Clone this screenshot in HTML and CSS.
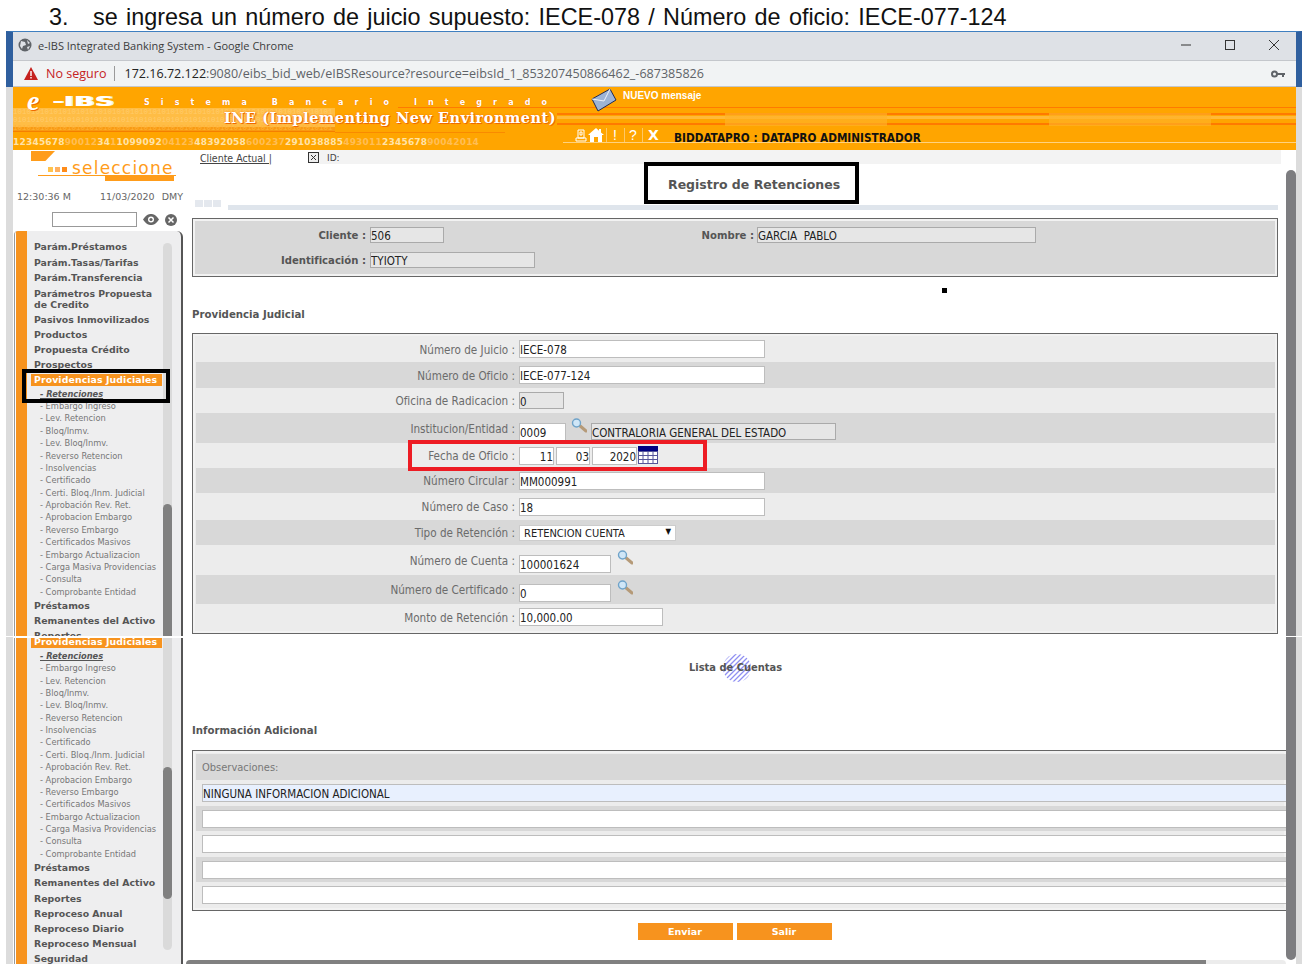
FILE: index.html
```html
<!DOCTYPE html>
<html lang="es">
<head>
  <meta charset="UTF-8" />
  <title>e-IBS Registro de Retenciones</title>
  <link rel="stylesheet" href="styles.css">
</head>
<body>

<svg class="defs" width="0" height="0">
  <symbol id="lupa" viewBox="0 0 16 15">
    <line x1="8" y1="7" x2="15" y2="13" stroke="#b59a78" stroke-width="3" stroke-linecap="round"/>
    <circle cx="5.5" cy="5" r="4" fill="#cfe6f7" stroke="#6fa3c9" stroke-width="1.4"/>
  </symbol>
</svg>

<h1 class="slide-title"><span class="num">3.</span>se ingresa un número de juicio supuesto: IECE-078 / Número de oficio: IECE-077-124</h1>

<div class="chrome">
  <div class="titlebar">
    <svg class="globe" width="14" height="14" viewBox="0 0 14 14"><circle cx="7" cy="7" r="6.5" fill="#5f6368"/><path d="M3 3l4 1 1 3-3 1-1 3-2-3zM9 2l3 3-2 1zM9 9l3-1-2 4z" fill="#dee1e6"/></svg>
    <span class="wintitle">e-IBS Integrated Banking System - Google Chrome</span>
    <div class="winbtns">
      <svg width="12" height="12" viewBox="0 0 12 12"><line x1="1" y1="6" x2="11" y2="6" stroke="#333"/></svg>
      <svg width="12" height="12" viewBox="0 0 12 12"><rect x="1.5" y="1.5" width="9" height="9" fill="none" stroke="#333"/></svg>
      <svg width="12" height="12" viewBox="0 0 12 12"><path d="M1 1l10 10M11 1L1 11" stroke="#333" fill="none"/></svg>
    </div>
  </div>
  <div class="addressbar">
    <svg class="warn" width="14" height="13" viewBox="0 0 14 13"><path d="M7 0l7 13H0z" fill="#c5221f"/><rect x="6.3" y="4" width="1.4" height="5" fill="#fff"/><rect x="6.3" y="10" width="1.4" height="1.5" fill="#fff"/></svg>
    <span class="notsecure">No seguro</span>
    <span class="url"><b>172.16.72.122</b>:9080/eibs_bid_web/eIBSResource?resource=eibsId_1_853207450866462_-687385826</span>
    <svg class="key" width="14" height="8" viewBox="0 0 14 8"><circle cx="3.5" cy="4" r="2.5" fill="none" stroke="#5f6368" stroke-width="2"/><path d="M6 3h8v2h-1v2h-2V5H6z" fill="#5f6368"/></svg>
  </div>
</div>

<div class="app">
  <header class="hdr">
    <div class="bits">
      <div>10101010101010101010101010101010101010101010101010101010101010101010101</div>
      <div>01010101010101010101010101010101010101010101010101010101010101010101010</div>
      <div class="bits-dark">10101010101010101010101010101010101010101010101010101010101010101010101</div>
    </div>
    <div class="hdr-top">
      <span class="logo-e">e</span>
      <span class="logo-ibs">-IBS</span>
      <span class="sistema">Sistema&nbsp;Bancario&nbsp;Integrado</span>
      <svg class="envelope" width="26" height="24" viewBox="0 0 26 24">
        <path d="M1 11L19 1l6 11L7 23z" fill="#9db4d6" stroke="#1f2a55"/>
        <path d="M1 11l12 2L19 1" fill="none" stroke="#eef2fa"/>
      </svg>
      <span class="nuevo">NUEVO mensaje</span>
    </div>
    <div class="ine">INE (Implementing New Environment)</div>
    <div class="hdr-bottom">
      <div class="digits">12345678<i>90012</i>34<i>1</i>1099092<i>04123</i>48392058<i>600237</i>291038885<i>493011</i>2345678<i>90042014</i></div>
      <div class="tools">
        <svg class="tool-doc" width="12" height="13" viewBox="0 0 12 13"><path d="M3 1h6v8H3zM1 9h10v3H1zM5 3h2v3H5z" fill="none" stroke="#fff"/></svg>
        <svg width="16" height="14" viewBox="0 0 16 14"><path d="M8 0L0 7h2v7h4V9h4v5h4V7h2l-3-2.6V1h-2v1.7z" fill="#fff"/></svg>
        <span class="tool-sep">!</span>
        <span class="tool-sep">?</span>
        <span class="tool-x">X</span>
        <span class="user">BIDDATAPRO : DATAPRO ADMINISTRADOR</span>
      </div>
    </div>
  </header>

  <div class="work">
    <aside class="side">
      <div class="side-top">
        <div class="tab-mark"></div>
        <div class="sel-row">
          <span class="dots"><i></i><i></i><i></i></span>
          <span class="seleccione">seleccione</span>
        </div>
        <div class="sel-bar"></div>
        <div class="time-row"><span>12:30:36 M</span><span>11/03/2020</span><span>DMY</span></div>
        <div class="search-row">
          <input class="search" type="text">
          <svg width="16" height="11" viewBox="0 0 16 11"><path d="M0 5.5C3 1 5.500 0 8 0s5 1 8 5.500C13 10 10.500 11 8 11S3 10 0 5.500z" fill="#666"/><circle cx="8" cy="5.500" r="3" fill="#fff"/><circle cx="8" cy="5.500" r="1.600" fill="#666"/></svg>
          <svg width="12" height="12" viewBox="0 0 12 12"><circle cx="6" cy="6" r="6" fill="#666"/><path d="M3.500 3.500l5 5M8.500 3.500l-5 5" stroke="#fff" stroke-width="1.500"/></svg>
        </div>
      </div>

      <div class="panel panel-a">
        <div class="strip"></div>
        <ul class="menu">
          <li class="m">Parám.Préstamos</li>
          <li class="m">Parám.Tasas/Tarifas</li>
          <li class="m">Parám.Transferencia</li>
          <li class="m m2">Parámetros Propuesta de Credito</li>
          <li class="m">Pasivos Inmovilizados</li>
          <li class="m">Productos</li>
          <li class="m">Propuesta Crédito</li>
          <li class="m">Prospectos</li>
          <li class="m active"><span>Providencias Judiciales</span></li>
          <li class="s current">- Retenciones</li>
          <li class="s">- Embargo Ingreso</li>
          <li class="s">- Lev. Retencion</li>
          <li class="s">- Bloq/Inmv.</li>
          <li class="s">- Lev. Bloq/Inmv.</li>
          <li class="s">- Reverso Retencion</li>
          <li class="s">- Insolvencias</li>
          <li class="s">- Certificado</li>
          <li class="s">- Certi. Bloq./Inm. Judicial</li>
          <li class="s">- Aprobación Rev. Ret.</li>
          <li class="s">- Aprobacion Embargo</li>
          <li class="s">- Reverso Embargo</li>
          <li class="s">- Certificados Masivos</li>
          <li class="s">- Embargo Actualizacion</li>
          <li class="s">- Carga Masiva Providencias</li>
          <li class="s">- Consulta</li>
          <li class="s">- Comprobante Entidad</li>
          <li class="m">Préstamos</li>
          <li class="m">Remanentes del Activo</li>
          <li class="m">Reportes</li>
        </ul>
        <div class="track track-a"><div class="thumb thumb-a"></div></div>
      </div>

      <div class="panel panel-b">
        <div class="strip"></div>
        <ul class="menu">
          <li class="m active"><span>Providencias Judiciales</span></li>
          <li class="s current">- Retenciones</li>
          <li class="s">- Embargo Ingreso</li>
          <li class="s">- Lev. Retencion</li>
          <li class="s">- Bloq/Inmv.</li>
          <li class="s">- Lev. Bloq/Inmv.</li>
          <li class="s">- Reverso Retencion</li>
          <li class="s">- Insolvencias</li>
          <li class="s">- Certificado</li>
          <li class="s">- Certi. Bloq./Inm. Judicial</li>
          <li class="s">- Aprobación Rev. Ret.</li>
          <li class="s">- Aprobacion Embargo</li>
          <li class="s">- Reverso Embargo</li>
          <li class="s">- Certificados Masivos</li>
          <li class="s">- Embargo Actualizacion</li>
          <li class="s">- Carga Masiva Providencias</li>
          <li class="s">- Consulta</li>
          <li class="s">- Comprobante Entidad</li>
          <li class="m">Préstamos</li>
          <li class="m">Remanentes del Activo</li>
          <li class="m">Reportes</li>
          <li class="m">Reproceso Anual</li>
          <li class="m">Reproceso Diario</li>
          <li class="m">Reproceso Mensual</li>
          <li class="m">Seguridad</li>
        </ul>
        <div class="track track-b"><div class="thumb thumb-b"></div></div>
      </div>
    </aside>

    <main class="content">
      <div class="infobar">
        <a class="cliente-actual">Cliente Actual |</a>
        <svg class="chk" width="11" height="11" viewBox="0 0 11 11"><rect x="0.500" y="0.500" width="10" height="10" fill="#eee" stroke="#333"/><path d="M3 3l5 5M8 3L3 8" stroke="#333"/></svg>
        <span class="id-bar">ID:</span>
      </div>

      <div class="title-box">Registro de Retenciones</div>

      <div class="divider">
        <span class="squares"><i></i><i></i><i></i></span>
        <span class="rule"></span>
      </div>

      <section class="box box-client">
        <div class="client-row">
          <label class="lbl-b lbl-client">Cliente :</label>
          <input class="inp ro w-74" value="506">
          <label class="lbl-b lbl-nombre">Nombre :</label>
          <input class="inp ro w-279" value="GARCIA  PABLO">
        </div>
        <div class="client-row">
          <label class="lbl-b lbl-client">Identificación :</label>
          <input class="inp ro w-165" value="TYIOTY">
        </div>
      </section>

      <h2 class="sec sec-prov">Providencia Judicial</h2>

      <section class="box fields">
        <div class="row"><label>Número de Juicio :</label><input class="inp w-246" value="IECE-078"></div>
        <div class="row dark"><label>Número de Oficio :</label><input class="inp w-246" value="IECE-077-124"></div>
        <div class="row"><label>Oficina de Radicacion :</label><input class="inp ro w-45" value="0"></div>
        <div class="row dark"><label>Institucion/Entidad :</label><input class="inp low w-47" value="0009"><svg class="lupa lupa-near"><use href="#lupa"/></svg><input class="inp ro low w-245" value="CONTRALORIA GENERAL DEL ESTADO"></div>
        <div class="row"><label>Fecha de Oficio :</label>
          <span class="date-group">
            <input class="inp num-r w-35" value="11"><input class="inp num-r w-34" value="03"><input class="inp num-r w-45" value="2020">
          </span>
          <svg class="cal" width="20" height="18" viewBox="0 0 20 18">
            <rect width="20" height="18" fill="#fff"/>
            <rect width="20" height="5" fill="#000080"/>
            <path d="M.5 5v13M5 5v13M10 5v13M15 5v13M19.500 5v13M0 5.500h20M0 9.500h20M0 13.500h20M0 17.500h20" stroke="#55559a" fill="none"/>
          </svg>
        </div>
        <div class="row dark"><label>Número Circular :</label><input class="inp w-246" value="MM000991"></div>
        <div class="row"><label>Número de Caso :</label><input class="inp w-246" value="18"></div>
        <div class="row dark"><label>Tipo de Retención :</label><div class="select"><span>RETENCION CUENTA</span><span class="arrow">▼</span></div></div>
        <div class="row"><label>Número de Cuenta :</label><input class="inp low w-92" value="100001624"><svg class="lupa lupa-far"><use href="#lupa"/></svg></div>
        <div class="row dark"><label>Número de Certificado :</label><input class="inp low w-92" value="0"><svg class="lupa lupa-far"><use href="#lupa"/></svg></div>
        <div class="row"><label>Monto de Retención :</label><input class="inp w-144" value="10,000.00"></div>
      </section>

      <div class="lista">
        <svg class="spinner" width="30" height="30" viewBox="0 0 30 30">
          <defs><clipPath id="disc"><circle cx="15" cy="15" r="14"/></clipPath></defs>
          <g clip-path="url(#disc)" stroke="#8f8ff2" stroke-width="1.300">
            <path d="M-10 10L10 -10M-10 15L15 -10M-10 20L20 -10M-10 25L25 -10M-10 30L30 -10M-5 30L35 -10M0 30L35 -5M5 30L35 0M10 30L35 5M15 30L35 10M20 30L35 15"/>
          </g>
        </svg>
        <span class="lista-text">Lista de Cuentas</span>
      </div>

      <h2 class="sec sec-info">Información Adicional</h2>

      <section class="box obs">
        <div class="obs-head">Observaciones:</div>
        <div class="obs-row"><input class="inp obs-inp filled" value="NINGUNA INFORMACION ADICIONAL"></div>
        <div class="obs-row dark"><input class="inp obs-inp"></div>
        <div class="obs-row"><input class="inp obs-inp"></div>
        <div class="obs-row dark"><input class="inp obs-inp"></div>
        <div class="obs-row"><input class="inp obs-inp"></div>
      </section>

      <div class="actions">
        <button type="button">Enviar</button>
        <button type="button">Salir</button>
      </div>

      <div class="hscroll"></div>
    </main>

    <div class="vscroll"></div>
  </div>
</div>

<!-- marcas de la captura -->
<div class="mark mark-menu"></div>
<div class="mark mark-fecha"></div>
<div class="dot"></div>
<div class="seam seam-left"></div>
<div class="seam seam-right"></div>

</body>
</html>
```

FILE: styles.css
```css
* {
  box-sizing: border-box;
}
body {
  margin: 0;
  width: 1304px;
  height: 964px;
  overflow: hidden;
  position: relative;
  background: white;
  font-family: "DejaVu Sans Condensed", "DejaVu Sans", sans-serif;
  font-size: 11px;
  color: #666;
}
.defs {
  position: absolute;
}
.slide-title {
  margin: 0;
  height: 31px;
  padding: 4px 0 0 49px;
  font: normal 23.400px/26px "Liberation Sans", Arial, sans-serif;
  word-spacing: 1.800px;
  color: #111;
  white-space: nowrap;
}
.slide-title .num {
  display: inline-block;
  width: 44px;
}

/* ventana chrome */
.chrome {
  margin-left: 6px;
  width: 1296px;
  border-left: 7px solid #2f5f9e;
  border-right: 6px solid #2f5f9e;
  border-top: 1px solid #3f7fc0;
}
.titlebar {
  height: 29px;
  background: #dee1e6;
  display: flex;
  align-items: center;
  padding: 0 0 2px 5px;
  border-bottom: 1px solid #c4c7cc;
}
.wintitle {
  margin-left: 6px;
  font: 11px "Open Sans", sans-serif;
  color: #3c3c3c;
}
.winbtns {
  margin-left: auto;
  display: flex;
  gap: 32px;
  padding-right: 16px;
}
.addressbar {
  height: 26px;
  background: #f1f3f4;
  display: flex;
  align-items: center;
  padding-left: 11px;
  border-bottom: 1px solid #c4c7cc;
  font: 12.550px "Open Sans", sans-serif;
  color: #5f6368;
}
.notsecure {
  margin-left: 8px;
  padding-right: 8px;
  border-right: 1px solid #9a9a9a;
  color: #c5221f;
  line-height: 15px;
}
.url {
  margin-left: 9px;
}
.url b {
  font-weight: normal;
  color: #222;
}
.key {
  margin-left: auto;
  margin-right: 11px;
}

/* aplicacion */
.app {
  margin-left: 6px;
  width: 1296px;
  border-left: 7px solid #dcdcdc;
  border-right: 6px solid #dcdcdc;
}
.hdr {
  position: relative;
  height: 63px;
  overflow: hidden;
  background-color: #ffa500;
  background-image:
    repeating-linear-gradient(90deg, transparent 0 162px, rgba(255, 178, 40, 0.65) 162px 324px),
    linear-gradient(#ff7a00, #ff7a00),
    linear-gradient(#ff7a00, #ff7a00),
    linear-gradient(#ffb938, #ffb938),
    linear-gradient(#ff7a00, #ff7a00),
    linear-gradient(#f98a00, #f98a00);
  background-repeat: no-repeat;
  background-position: 550px 26px, 385px 20px, 544px 26px, 544px 29px, 544px 36px, 322px 45px;
  background-size: 100% 13px, 100% 1px, 100% 2px, 100% 3px, 100% 2px, 170px 1px;
}
.bits {
  position: absolute;
  left: 0;
  top: 21px;
  width: 322px;
  height: 24px;
  overflow: hidden;
  font: 7.500px/8px "Liberation Mono", monospace;
  color: #ffcb6b;
  background: linear-gradient(#ffbd45, #ffbd45 19px, #f99a12 19px, #f99a12 23px, #f57f00 23px);
  white-space: nowrap;
}
.bits-dark {
  color: #ffb23a;
}
.hdr-top {
  position: relative;
  height: 23px;
  display: flex;
  align-items: flex-end;
}
.logo-e {
  margin: 0 0 -2px 14px;
  font: italic bold 28px/22px "Liberation Serif", serif;
  color: white;
  text-shadow: 1px 1px 0 #f06a00;
}
.logo-ibs {
  width: 60px;
  margin-left: 13px;
  font: bold 14px/17px "DejaVu Sans", sans-serif;
  color: white;
  text-shadow: 1px 0 0 #f7f0d8;
  transform: scaleX(1.950);
  transform-origin: left;
}
.sistema {
  margin-left: 31.500px;
  width: 420px;
  font: bold 8px/15px "DejaVu Sans", sans-serif;
  letter-spacing: 11.100px;
  color: #fff;
  text-shadow: 0 0 1px #f06a00;
  white-space: nowrap;
}
.envelope {
  margin-left: 27px;
  align-self: flex-start;
  margin-top: 1px;
}
.nuevo {
  align-self: flex-start;
  margin: 3px 0 0 6px;
  font: bold 10px/12px "Liberation Sans", sans-serif;
  color: white;
}
.ine {
  position: relative;
  height: 15px;
  margin-left: 211px;
  font: bold 14.500px/15px "DejaVu Serif", serif;
  color: white;
  text-shadow: 0 0 2px #f06a00, 1px 1px 0 #f06a00;
  white-space: nowrap;
  letter-spacing: 0.500px;
}
.hdr-bottom {
  position: relative;
  height: 25px;
  display: flex;
}
.digits {
  width: 550px;
  padding-top: 12px;
  font: bold 9px/11px "DejaVu Sans", sans-serif;
  letter-spacing: 0.210px;
  color: #ffe3a8;
  white-space: nowrap;
}
.digits i {
  font-style: normal;
  color: #ffbe55;
}
.tools {
  flex: 1;
  height: 18px;
  display: flex;
  align-items: flex-end;
  padding-left: 12px;
  border-bottom: 1px solid #ffd27f;
  color: white;
}
.tools svg {
  margin-right: 1px;
}
.tool-sep {
  width: 17px;
  height: 14px;
  text-align: center;
  font: 14px/14px "Liberation Sans", sans-serif;
  border-left: 1px solid #ffc766;
  margin-left: 1px;
}
.tool-x {
  width: 18px;
  height: 14px;
  margin-left: 1px;
  border-left: 1px solid #ffc766;
  padding-left: 5px;
  font: bold 14px/14px "DejaVu Sans", sans-serif;
}
.user {
  margin: 0 0 -3px 14px;
  font: bold 11.700px/13px "DejaVu Sans Condensed", "DejaVu Sans", sans-serif;
  color: #111;
  white-space: nowrap;
}

.work {
  display: flex;
  height: 814px;
}

/* columna izquierda */
.side {
  width: 170px;
  flex: none;
}
.side-top {
  height: 80px;
  position: relative;
}
.tab-mark {
  width: 24px;
  height: 10px;
  margin: 1px 0 0 18px;
  background: #ff9c1a;
  clip-path: polygon(0 0, 100% 0, 60% 100%, 0 100%);
}
.sel-row {
  height: 15px;
  margin: 0 7px 0 25px;
  display: flex;
  align-items: flex-end;
  border-bottom: 1px solid #ff9c1a;
}
.dots {
  display: flex;
  gap: 2px;
  margin: 0 5px 3px 10px;
}
.dots i {
  width: 5px;
  height: 5px;
  background: #ffc34d;
}
.dots i:nth-child(2) {
  background: #ffb060;
}
.dots i:last-child {
  background: #ff8c1a;
}
.seleccione {
  font: 17px/20px "DejaVu Sans", sans-serif;
  letter-spacing: 1.200px;
  color: #ff9c1a;
  margin-bottom: -3px;
  white-space: nowrap;
}
.sel-bar {
  width: 69px;
  height: 5px;
  margin-left: 92px;
  background: #ff9c1a;
}
.time-row {
  display: flex;
  height: 14px;
  margin-top: 9px;
  padding-left: 4px;
  gap: 7px;
  font: 9.500px/14px "DejaVu Sans", sans-serif;
  color: #666;
  white-space: nowrap;
}
.time-row span:first-child {
  width: 76px;
}
.search-row {
  display: flex;
  align-items: center;
  margin: 8px 0 0 39px;
  gap: 6px;
}
.search {
  width: 85px;
  height: 15px;
  border: 1px solid #999;
  background: white;
  padding: 0;
}
.panel {
  display: flex;
  overflow: hidden;
  margin-left: 1px;
  width: 169px;
  background: #eeeeef;
  border-left: 1px solid #999;
  border-right: 2px solid #555;
}
.panel-a {
  height: 406px;
  border-radius: 4px 6px 0 0;
}
.panel-b {
  height: 328px;
  margin-top: 1px;
}
.strip {
  width: 12px;
  flex: none;
  background: #f7931e;
  border-left: 1px solid #fff;
}
.menu {
  list-style: none;
  margin: 0;
  padding: 8.400px 0 0 4px;
  width: 136px;
  flex: none;
}
.panel-b .menu {
  padding-top: 0;
  margin-top: -3.400px;
}
.m {
  height: 15.200px;
  font: bold 9.350px/15.200px "DejaVu Sans", sans-serif;
  color: #555;
  padding-left: 3px;
  white-space: nowrap;
}
.m2 {
  height: 26.800px;
  padding-top: 3px;
  line-height: 11px;
  white-space: normal;
}
.active {
  padding-top: 1.500px;
  padding-left: 0;
}
.active span {
  display: block;
  width: 131px;
  height: 12px;
  padding-left: 3px;
  background: #f7931e;
  color: white;
  line-height: 12px;
  letter-spacing: 0.100px;
}
.s {
  height: 12.380px;
  padding-left: 9px;
  font: 9.200px/12.380px "DejaVu Sans Condensed", "DejaVu Sans", sans-serif;
  color: #777;
  white-space: nowrap;
}
.current {
  font-weight: bold;
  font-style: italic;
  color: #555;
  text-decoration: underline;
}
.track {
  width: 9px;
  background: #dadada;
  border-radius: 5px;
}
.track-a {
  margin-top: 12px;
  height: 394px;
}
.track-b {
  height: 322px;
  margin-top: -10px;
}
.thumb {
  background: #808080;
  border-radius: 5px;
}
.thumb-a {
  margin-top: 261px;
  height: 140px;
}
.thumb-b {
  margin-top: 139px;
  height: 132px;
}

/* contenido */
.content {
  width: 1103px;
  flex: none;
  overflow: hidden;
}
.infobar {
  display: flex;
  align-items: center;
  height: 14px;
  padding-left: 17px;
  font: 9.500px/14px "DejaVu Sans", sans-serif;
  color: #444;
}
.cliente-actual {
  text-decoration: underline;
  width: 109px;
  flex: none;
  padding-top: 1px;
  font-family: "DejaVu Sans Condensed", "DejaVu Sans", sans-serif;
  font-size: 10.500px;
}
.chk {
  flex: none;
  margin-left: -1px;
}
.id-bar {
  padding: 1px 0 0 8px;
  width: 962px;
  height: 14px;
  background: #f3f3f3;
  font-size: 9px;
}
.title-box {
  position: relative;
  z-index: 1;
  width: 215px;
  height: 42px;
  margin: -2px 0 0 461px;
  border: 4px solid #000;
  background: white;
  padding-left: 20px;
  font: bold 12.500px/38px "DejaVu Sans", sans-serif;
  color: #555;
  white-space: nowrap;
}
.divider {
  display: flex;
  height: 10px;
  margin: -4px 8px 0 12px;
}
.squares {
  display: flex;
  gap: 1px;
  height: 7px;
  width: 33px;
}
.squares i {
  width: 8px;
  height: 7px;
  background: #e4e8ee;
}
.rule {
  flex: 1;
  height: 5px;
  margin-top: 5px;
  background: #dfe5ec;
}
.box {
  margin: 0 8px 0 9px;
  border: 1px solid #666;
  box-shadow: inset 0 0 0 2px #f2f2f2;
}
.box-client {
  height: 59px;
  margin-top: 8px;
  background: #d8d8d8;
  padding-top: 8px;
}
.client-row {
  display: flex;
  align-items: center;
  height: 16px;
  margin-bottom: 9px;
}
.lbl-b {
  font: bold 10.100px "DejaVu Sans", sans-serif;
  color: #555;
  text-align: right;
  white-space: nowrap;
}
.lbl-client {
  width: 173px;
  margin-right: 4px;
}
.lbl-nombre {
  width: 310px;
  margin-right: 3px;
}
.inp {
  height: 18px;
  padding: 2px 1px 0 0;
  margin: 0;
  border: 1px solid #bdbdbd;
  outline: none;
  background: white;
  font: 11.500px/14px "DejaVu Sans Condensed", "DejaVu Sans", sans-serif;
  color: #222;
}
.client-row .inp {
  height: 16px;
}
.ro {
  background: #e6e6e6;
  border-color: #aaa;
  height: 17px;
}
.w-34 { width: 34px; }
.w-35 { width: 35px; }
.w-45 { width: 45px; }
.w-47 { width: 47px; }
.w-74 { width: 74px; }
.w-92 { width: 92px; }
.w-144 { width: 144px; }
.w-165 { width: 165px; }
.w-245 { width: 245px; }
.w-246 { width: 246px; }
.w-279 { width: 279px; }

.sec {
  margin: 0 0 0 9px;
  font: bold 10.200px/14px "DejaVu Sans", sans-serif;
  color: #555;
}
.sec-prov {
  padding-top: 31px;
  height: 56px;
}
.sec-info {
  padding-top: 24px;
  height: 50px;
}
.fields {
  height: 301px;
  background: #ececec;
  padding: 2px 2px 0 3px;
  display: grid;
  grid-template-rows: 26px 26px 25px 30px 25px 25px 27px 25px 30px 29px 26px;
}
.row {
  display: flex;
  align-items: center;
}
.dark {
  background: #d8d8d8;
}
.row label {
  width: 319px;
  flex: none;
  margin-right: 4px;
  padding-top: 1px;
  text-align: right;
  font-size: 11.600px;
  white-space: nowrap;
  color: #6b6b6b;
}
.low {
  margin-top: 7px;
}
.date-group {
  display: flex;
  gap: 2px;
}
.num-r {
  text-align: right;
  padding-right: 0;
}
.cal {
  margin: -1px 0 0 1px;
}
.lupa {
  width: 16px;
  height: 15px;
  align-self: flex-start;
  margin-top: 5px;
}
.lupa-near {
  margin-left: 5px;
  margin-right: 4px;
}
.lupa-far {
  margin-left: 6px;
}
.select {
  width: 157px;
  height: 16px;
  display: flex;
  justify-content: space-between;
  padding: 0 4px;
  background: white;
  border: 1px solid #ccc;
  font: 11px/15px "DejaVu Sans Condensed", "DejaVu Sans", sans-serif;
  color: #222;
}
.arrow {
  font-size: 8px;
  line-height: 12px;
  color: #111;
}
.lista {
  display: flex;
  justify-content: center;
  align-items: center;
  height: 66px;
  padding-top: 2px;
  margin-left: 2px;
}
.spinner {
  margin-right: -30px;
  transform: translateX(33px);
  flex: none;
}
.lista-text {
  position: relative;
  font: bold 11px/14px "DejaVu Sans Condensed", "DejaVu Sans", sans-serif;
  color: #555;
}
.obs {
  margin-right: 0;
  border-right: none;
  height: 161px;
  padding: 3px 0 0 3px;
  background: #ececec;
}
.obs-head {
  height: 26px;
  padding-left: 6px;
  background: #d8d8d8;
  line-height: 27px;
  color: #777;
}
.obs-row {
  height: 25.500px;
  padding: 4px 0 0 6px;
}
.obs-inp {
  display: block;
  width: 1100px;
}
.filled {
  background: #e8f0fe;
}
.actions {
  display: flex;
  justify-content: center;
  gap: 4px;
  margin-top: 12px;
  height: 18px;
}
.actions button {
  width: 95px;
  height: 17px;
  border: none;
  padding: 0;
  background: #f7931e;
  color: white;
  font: bold 9.500px/17px "DejaVu Sans", sans-serif;
}
.hscroll {
  width: 1100px;
  height: 6px;
  margin: 19px 0 0 3px;
  background: linear-gradient(90deg, #808080 1020px, #ececec 1020px);
  border-radius: 4px 4px 0 0;
}
.vscroll {
  width: 10px;
  height: 790px;
  margin-top: 20px;
  background: #7d7d80;
  border-radius: 5px;
}

/* marcas sobre la captura */
.mark {
  position: absolute;
  z-index: 3;
}
.mark-menu {
  left: 22px;
  top: 369px;
  width: 148px;
  height: 34px;
  border: 4px solid #000;
}
.mark-fecha {
  left: 408px;
  top: 440px;
  width: 299px;
  height: 31px;
  border: 4px solid #ed1c24;
}
.dot {
  position: absolute;
  left: 942px;
  top: 288px;
  width: 5px;
  height: 5px;
  background: #000;
}
.seam {
  position: absolute;
  top: 636px;
  height: 1px;
  background: white;
  z-index: 2;
}
.seam-left {
  left: 5px;
  width: 178px;
}
.seam-right {
  left: 1286px;
  width: 18px;
}
```
